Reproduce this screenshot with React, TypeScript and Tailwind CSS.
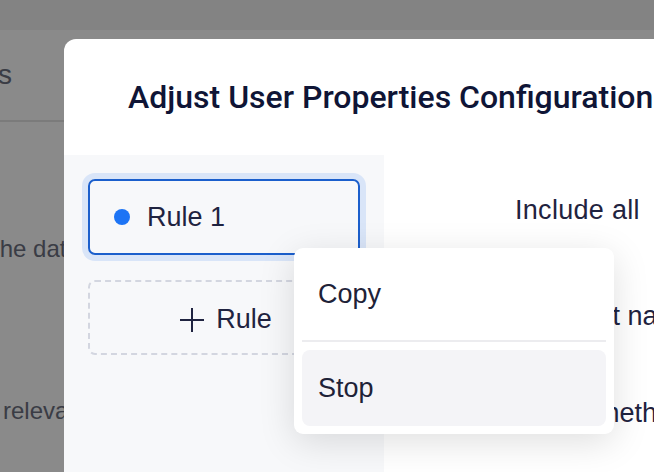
export default function App() {
  return (
    <div className="relative h-[472px] w-[654px] overflow-hidden bg-white font-['Liberation_Sans',Arial,sans-serif]">
      {/* page behind the dialog */}
      <div className="h-[30px] bg-[#f2f2f2]" />
      <div className="flex h-[92px] items-center border-b-2 border-[#e4e4e4]">
        <div className="flex w-[12px] justify-end whitespace-nowrap text-[28px] text-[#6b7080]">
          Properties
        </div>
      </div>
      <div className="ml-[-7px] mt-[112px] whitespace-nowrap text-[24px] leading-[30px] text-[#6b7080]">
        the data source
      </div>
      <div className="ml-[3px] mt-[132px] whitespace-nowrap text-[24px] leading-[30px] text-[#6b7080]">
        relevant events
      </div>

      <div className="absolute inset-0 bg-black/[0.46]" />

      {/* dialog */}
      <div className="absolute left-[64px] top-[39px] flex h-[520px] w-[720px] flex-col overflow-hidden rounded-tl-[12px] bg-white">
        <div className="flex h-[116px] shrink-0 items-center pl-[64px]">
          <h2 className="whitespace-nowrap font-['Roboto',sans-serif] text-[32px] font-medium text-[#0f1536]">
            Adjust User Properties Configuration
          </h2>
        </div>
        <div className="flex flex-1">
          <div className="flex w-[320px] shrink-0 flex-col gap-[25px] bg-[#f7f8fa] p-6">
            <div className="flex h-[76px] items-center gap-[17px] rounded-[7px] border-2 border-[#1b5fcc] pl-6 ring-[6px] ring-[#d9e5f8]">
              <span className="h-4 w-4 rounded-full bg-[#1d74f5]" />
              <span className="text-[27px] leading-none text-[#1f2340]">Rule 1</span>
            </div>
            <div className="flex h-[75px] items-center justify-center gap-[12px] rounded-[7px] border-2 border-dashed border-[#d3d6e0] pl-[4px] pt-[4px]">
              <svg width="24" height="26" viewBox="0 0 24 26" className="text-[#1f2340]">
                <path d="M12 1v24M0 13h24" stroke="currentColor" strokeWidth="2" fill="none" />
              </svg>
              <span className="text-[27px] leading-none text-[#1f2340]">Rule</span>
            </div>
          </div>
          <div className="flex flex-1 flex-col pt-[42px] text-[27px] leading-none text-[#1f2340]">
            <div className="whitespace-nowrap pl-[131px] tracking-[0.3px]">Include all</div>
            <div className="mt-[79px] whitespace-nowrap pl-[167px]">Event name</div>
            <div className="mt-[70px] whitespace-nowrap pl-[132px]">Match method</div>
          </div>
        </div>
      </div>

      {/* context menu */}
      <div className="absolute left-[294px] top-[248px] w-[320px] rounded-[9px] bg-white p-2 shadow-[0_8px_36px_rgba(0,0,0,0.13)]">
        <div className="flex h-[76px] items-center rounded-[8px] px-4 text-[27px] text-[#1e2238]">Copy</div>
        <div className="my-2 h-[2px] bg-[#ececef]" />
        <div className="flex h-[76px] items-center rounded-[8px] bg-[#f4f4f7] px-4 text-[27px] text-[#1e2238]">Stop</div>
      </div>
    </div>
  )
}
